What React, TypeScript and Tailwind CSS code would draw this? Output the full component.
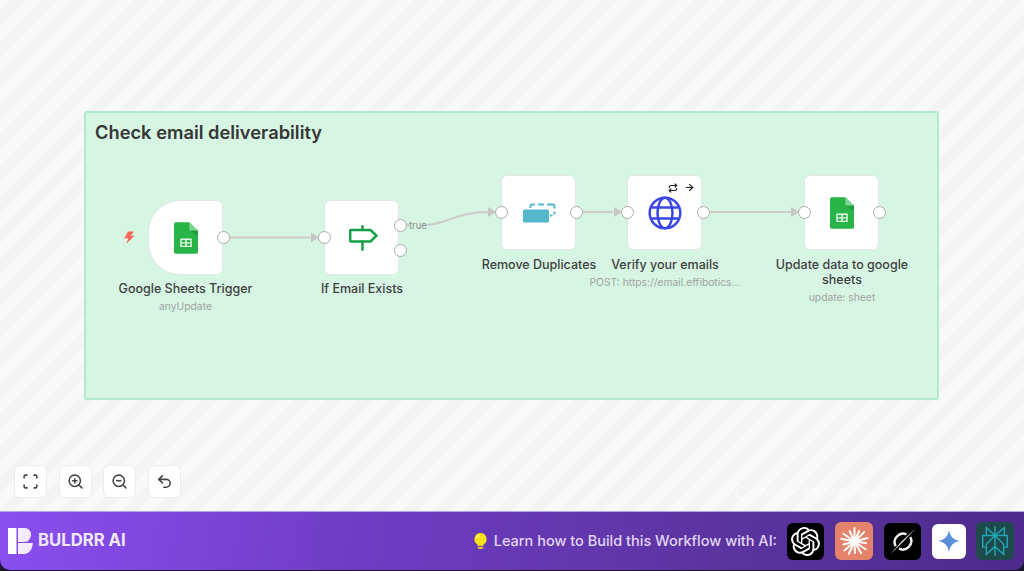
import React from "react";
import { Scan, ZoomIn, ZoomOut, Undo2, ArrowRight, Repeat } from "lucide-react";
import { SiOpenai, SiPerplexity } from "react-icons/si";

function SheetsIcon() {
  return (
    <svg width="24" height="32" viewBox="0 0 25 33">
      <path d="M2 0H16L25 9V31a2 2 0 0 1-2 2H2a2 2 0 0 1-2-2V2a2 2 0 0 1 2-2z" fill="#28b446" />
      <path d="M16 0L25 9H18a2 2 0 0 1-2-2z" fill="#7fd694" />
      <path d="M16.5 9L25 14V9z" fill="#1f9a3a" />
      <path d="M6.5 17H18.5V26H6.5z M8 18.5V21H11.7V18.5z M13.3 18.5V21H17V18.5z M8 22.2V24.5H11.7V22.2z M13.3 22.2V24.5H17V22.2z" fill="#e3f5e8" fillRule="evenodd" />
    </svg>
  );
}

function SignIcon() {
  return (
    <svg className="ml-[3px]" width="29" height="26" viewBox="0 0 29 26" fill="none" stroke="#16a047" strokeWidth="2.5" strokeLinecap="round" strokeLinejoin="round">
      <path d="M13.5 1.3V5M13.5 16.5V24.7" />
      <path d="M2 5H21.5L27.5 10.7L21.5 16.5H2a.8.8 0 0 1-.8-.8V5.8A.8.8 0 0 1 2 5z" />
    </svg>
  );
}

function DedupeIcon() {
  return (
    <svg className="ml-px" width="33" height="20" viewBox="0 0 33 20">
      <g fill="none" stroke="#53b8cc" strokeWidth="2">
        <path d="M7.5 5V3a1.5 1.5 0 0 1 1.5-1.5H12" />
        <path d="M15 1.5H21" />
        <path d="M24 1.5H30a1.5 1.5 0 0 1 1.5 1.5V5.5" />
        <path d="M31.5 8.5V11.5" />
        <path d="M27 12.5H29.5" />
      </g>
      <rect x="0" y="6.5" width="26" height="13" rx="1.5" fill="#53b8cc" />
    </svg>
  );
}

function GlobeIcon() {
  return (
    <svg width="34" height="34" viewBox="0 0 34 34" fill="none" stroke="#3b46e6" strokeWidth="2.5">
      <circle cx="17" cy="17" r="15.3" />
      <ellipse cx="17" cy="17" rx="7.5" ry="15.3" />
      <path d="M3.5 11.5H30.5M3.5 22.5H30.5" />
    </svg>
  );
}

function Handle({ className }: { className: string }) {
  return <div className={`absolute w-[13px] h-[13px] rounded-full bg-white border-[1.5px] border-[#ababab] ${className}`} />;
}

function NodeLabel({ title, sub, className }: { title: string; sub?: string; className: string }) {
  return (
    <div className={`absolute flex flex-col items-center text-center ${className}`}>
      <div className="text-[12.5px] leading-[15px] font-medium text-[#3f3f3f]">{title}</div>
      {sub && <div className="mt-[4px] text-[10.3px] leading-[13px] text-[#a3a3a3] whitespace-nowrap">{sub}</div>}
    </div>
  );
}

function Box({ className, children }: { className: string; children?: React.ReactNode }) {
  return (
    <div className={`absolute w-[75px] h-[75px] bg-white border border-[#dfe8e2] flex items-center justify-center ${className}`}>
      {children}
    </div>
  );
}

function ControlButton({ children }: { children: React.ReactNode }) {
  return (
    <button className="w-[33px] h-[33px] rounded-md bg-white border border-[#ececec] flex items-center justify-center text-[#444]">
      {children}
    </button>
  );
}

function Bulb() {
  return (
    <svg width="15" height="18" viewBox="0 0 16 18">
      <path d="M8 0.5a6.5 6.5 0 0 1 4 11.6c-.7.6-1 1.2-1 1.9H5c0-.7-.3-1.3-1-1.9A6.5 6.5 0 0 1 8 .5z" fill="#f7e21a" />
      <path d="M5 15H11V16.5L9.5 17.5H6.5L5 16.5z" fill="#f0c419" />
      <path d="M4 6a4 4 0 0 1 3-3" fill="none" stroke="#fff6a8" strokeWidth="1.2" />
    </svg>
  );
}

function BuldrrLogo() {
  return (
    <svg width="25" height="26" viewBox="0 0 25 26">
      <path d="M0 0H8.5V26H0z" fill="#ffffff" />
      <path d="M10 0H16.5a6.5 6.5 0 0 1 6.5 7.5C22.5 10 21 12 19.5 13.5C17 14 13 14 10 14z" fill="#f3ecfe" />
      <path d="M10 15H24.8C24.6 21.5 21 26 15.5 26H10z" fill="#f3ecfe" />
    </svg>
  );
}

function ClaudeMark() {
  const rays = [0, 24, 46, 75, 98, 125, 150, 178, 205, 228, 255, 282, 305, 335];
  return (
    <svg width="29" height="29" viewBox="0 0 29 29">
      {rays.map((deg, i) => (
        <line key={deg} x1="14.5" y1="14.5" x2="14.5" y2={i % 3 === 1 ? 3 : 1} stroke="#fff" strokeWidth="2" strokeLinecap="round" transform={`rotate(${deg} 14.5 14.5)`} />
      ))}
      <circle cx="14.5" cy="14.5" r="4" fill="#fff" />
    </svg>
  );
}

function GrokMark() {
  return (
    <svg width="28" height="27" viewBox="0 0 28 27" fill="none">
      <g stroke="#f2f2f2" strokeWidth="2.4">
        <path d="M17.5 6.3A8.6 8.6 0 0 0 6.6 18.2" />
        <path d="M10 20.7A8.6 8.6 0 0 0 21.3 9" />
      </g>
      <path d="M27 0L14 14L1 26.5L13 13z" fill="#e8e8e8" />
    </svg>
  );
}

function GeminiMark() {
  return (
    <svg width="22" height="22" viewBox="0 0 22 22">
      <defs>
        <linearGradient id="gem" x1="0" y1="1" x2="1" y2="0">
          <stop offset="0" stopColor="#6b7fd0" />
          <stop offset="1" stopColor="#4d9fe0" />
        </linearGradient>
      </defs>
      <path d="M11 0C12 6.5 15.5 10 22 11C15.5 12 12 15.5 11 22C10 15.5 6.5 12 0 11C6.5 10 10 6.5 11 0z" fill="url(#gem)" />
    </svg>
  );
}

export default function App() {
  return (
    <div className="w-[1024px] h-[571px] overflow-hidden flex flex-col bg-[#1b1630] font-['Inter','Liberation_Sans',sans-serif]">
      {/* Canvas */}
      <div className="relative h-[511px] bg-[repeating-linear-gradient(-45deg,#f9f9f9_0px,#f9f9f9_11px,#f4f4f4_11px,#f4f4f4_22px)]">
        {/* Sticky note group */}
        <div className="absolute left-[84px] top-[111px] w-[855px] h-[289px] bg-[#d6f5e3] border-2 border-[#b3eacb] rounded-[3px]">
          <div className="pl-[9px] pt-[7px] text-[18.3px] leading-[24px] font-semibold text-[#363636]">Check email deliverability</div>
        </div>

        {/* Edges */}
        <svg className="absolute left-0 top-0" width="1024" height="511" fill="none">
          <g stroke="#cccccc" strokeWidth="2.2">
            <path d="M230 237.5H312" />
            <path d="M407 225C450 228 450 212 488 212" />
            <path d="M583 212H613" />
            <path d="M709 212H791" />
          </g>
          <g fill="#c6c6c6">
            <path d="M319 237.5L311 232.5V242.5z" />
            <path d="M496 212L488 207V217z" />
            <path d="M622 212L614 207V217z" />
            <path d="M799 212L791 207V217z" />
          </g>
        </svg>

        <svg className="absolute left-[122px] top-[231px]" width="13" height="13" viewBox="0 0 13 13">
          <path d="M6 0.5H12L8.8 4.8H12.5L4.5 12.8L6.2 7.3H1.5L3 6z" fill="#f9695b" />
        </svg>

        {/* Nodes */}
        <Box className="left-[148px] top-[200px] rounded-l-[32px] rounded-r-[6px]"><SheetsIcon /></Box>
        <Handle className="left-[217px] top-[231px]" />
        <NodeLabel className="left-[105px] top-[281px] w-[161px]" title="Google Sheets Trigger" sub="anyUpdate" />

        <Box className="left-[324px] top-[200px] rounded-[6px]"><SignIcon /></Box>
        <Handle className="left-[318px] top-[231px]" />
        <Handle className="left-[394px] top-[219px]" />
        <Handle className="left-[394px] top-[244px]" />
        <div className="absolute left-[409px] top-[220px] text-[9.5px] leading-[12px] text-[#8a8a8a] bg-[#d6f5e3]">true</div>
        <NodeLabel className="left-[302px] top-[281px] w-[120px]" title="If Email Exists" />

        <Box className="left-[501px] top-[175px] rounded-[6px]"><DedupeIcon /></Box>
        <Handle className="left-[495px] top-[206px]" />
        <Handle className="left-[570px] top-[206px]" />
        <NodeLabel className="left-[469px] top-[257px] w-[140px]" title="Remove Duplicates" />

        <Box className="left-[627px] top-[175px] rounded-[6px]"><GlobeIcon /></Box>
        <Handle className="left-[621px] top-[206px]" />
        <Handle className="left-[697px] top-[206px]" />
        <div className="absolute left-[668px] top-[182px] flex items-center gap-[6px] text-[#222]">
          <Repeat size={10} strokeWidth={2.6} />
          <ArrowRight size={11} strokeWidth={2.4} />
        </div>
        <NodeLabel className="left-[585px] top-[257px] w-[160px]" title="Verify your emails" sub="POST: https://email.effibotics..." />

        <Box className="left-[804px] top-[175px] rounded-[6px]"><SheetsIcon /></Box>
        <Handle className="left-[798px] top-[206px]" />
        <Handle className="left-[873px] top-[206px]" />
        <NodeLabel className="left-[771px] top-[257px] w-[142px]" title="Update data to google sheets" sub="update: sheet" />

        {/* Controls */}
        <div className="absolute left-[14px] top-[465px] flex gap-[11.5px]">
          <ControlButton><Scan size={17} strokeWidth={2.2} /></ControlButton>
          <ControlButton><ZoomIn size={17} strokeWidth={2.2} /></ControlButton>
          <ControlButton><ZoomOut size={17} strokeWidth={2.2} /></ControlButton>
          <ControlButton><Undo2 size={17} strokeWidth={2.2} /></ControlButton>
        </div>

        {/* Faint white hint over the canvas */}
        <div className="absolute left-[735px] top-[484px] flex items-center gap-[8px] text-white opacity-50">
          <svg width="15" height="15" viewBox="0 0 15 15" fill="none" stroke="#ffffff" strokeWidth="2">
            <path d="M12 2.5A6.5 6.5 0 1 0 13.5 10" />
          </svg>
          <span className="text-[12px] leading-[18px] font-medium whitespace-nowrap">Press CTRL+F5 if the workflow</span>
        </div>
      </div>

      {/* Bottom bar */}
      <div className="h-[59px] rounded-b-[10px] border-t border-[#b9a1ea] flex items-center justify-between pl-[8px] pr-[10px] bg-[linear-gradient(100deg,#8a4ff0_0%,#6f3cc4_35%,#5b349f_70%,#4e2a8c_100%)]">
        <div className="flex items-center gap-[5px]">
          <BuldrrLogo />
          <span className="text-[16.7px] font-bold text-[#efe8fd]">BULDRR AI</span>
        </div>
        <div className="flex items-center">
          <Bulb />
          <span className="ml-[6px] mr-[10px] text-[14.5px] font-medium text-[#e2d6f7]">Learn how to Build this Workflow with AI:</span>
          <div className="flex items-center gap-[11px]">
            <div className="w-[37px] h-[37px] rounded-md bg-black flex items-center justify-center text-white"><SiOpenai size={29} /></div>
            <div className="w-[38px] h-[38px] rounded-md bg-[#e5826b] flex items-center justify-center"><ClaudeMark /></div>
            <div className="w-[37px] h-[37px] rounded-md bg-black flex items-center justify-center"><GrokMark /></div>
            <div className="w-[34px] h-[35px] rounded-md bg-white flex items-center justify-center"><GeminiMark /></div>
            <div className="-ml-px w-[38px] h-[38px] rounded-md bg-[#1f4a4c] flex items-center justify-center text-[#23a5b5]"><SiPerplexity size={30} /></div>
          </div>
        </div>
      </div>
    </div>
  );
}
